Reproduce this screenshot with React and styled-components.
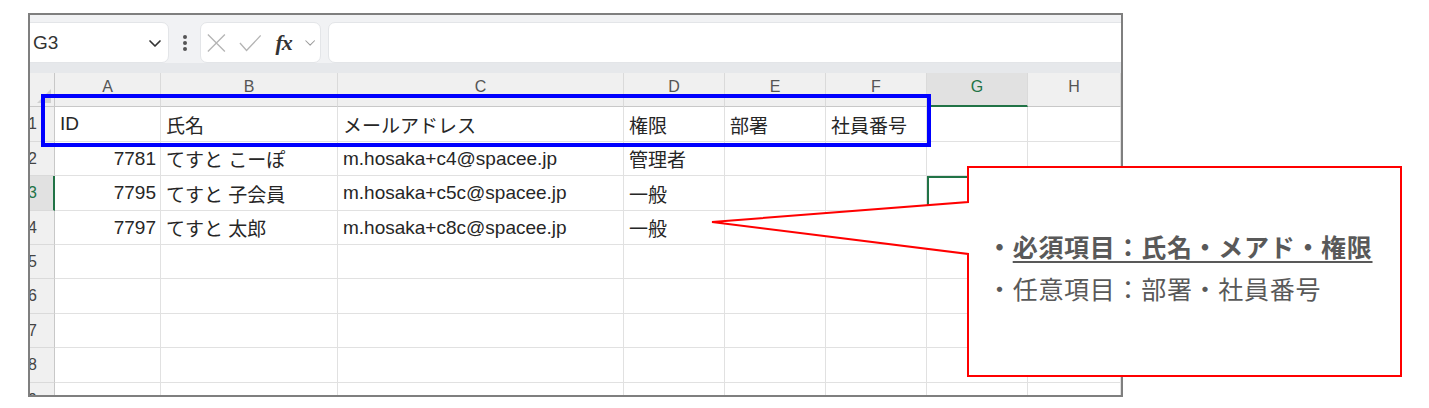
import React from 'react';
import styled, { createGlobalStyle, css } from 'styled-components';

const GlobalStyle = createGlobalStyle`
    html, body {
        margin: 0;
        padding: 0;
        background: #ffffff;
    }
    body {
        font-family: "Liberation Sans", "Noto Sans CJK JP", sans-serif;
    }
`;

const GREEN = '#217346';

const Page = styled.div`
    position: relative;
    width: 1429px;
    height: 408px;
    padding: 13px 0 0 28px;
    box-sizing: border-box;
    overflow: hidden;
`;

const Window = styled.div`
    width: 1095px;
    height: 384px;
    border: 2px solid #7f7f7f;
    box-sizing: border-box;
    overflow: hidden;
    background: #ffffff;
    display: flex;
    flex-direction: column;
`;

const Toolbar = styled.div`
    flex-shrink: 0;
    display: flex;
    align-items: center;
    height: 48px;
    padding-top: 7px;
    box-sizing: border-box;
    background: #f1f2f4;
`;

const Band = styled.div`
    flex-shrink: 0;
    height: 10px;
    background: #e6e8eb;
`;

const Box = styled.div`
    height: 41px;
    box-sizing: border-box;
    background: #ffffff;
    border: 1px solid #e3e5e8;
    border-radius: 7px;
    display: flex;
    align-items: center;
`;

const NameBox = styled(Box)`
    width: 148px;
    margin-left: -9px;
    padding: 0 6px 0 11px;
    justify-content: space-between;
    font-size: 19px;
    color: #333333;
`;

const Dots = styled.div`
    width: 31px;
    display: flex;
    justify-content: center;
    color: #555555;
`;

const FxBox = styled(Box)`
    width: 121px;
    padding: 0 4px 0 5px;
    gap: 12px;
`;

const Fx = styled.span`
    font-family: "Liberation Serif", serif;
    font-style: italic;
    font-weight: bold;
    font-size: 22px;
    color: #333333;
    margin-left: 2px;
    letter-spacing: -1px;
`;

const FormulaInput = styled(Box)`
    flex: 1;
    margin-left: 7px;
    margin-right: -12px;
`;

const Grid = styled.div`
    flex: none;
    display: grid;
    grid-template-columns: 25px 106px 177px 286px 101px 101px 101px 101px 1fr;
    grid-template-rows: 34px 35px 34px 35px 34px 34px 35px 34px 35px 34px;
`;

const Corner = styled.div`
    position: relative;
    background: #f0f0f0;
    border-right: 1px solid #c8c8c8;
    border-bottom: 1px solid #c8c8c8;
    box-sizing: border-box;
    &::after {
        content: '';
        position: absolute;
        right: 3px;
        bottom: 3px;
        border-style: solid;
        border-width: 0 0 14px 14px;
        border-color: transparent transparent #d0d0d0 transparent;
    }
`;

const ColHead = styled.div`
    box-sizing: border-box;
    display: flex;
    justify-content: center;
    align-items: center;
    padding-bottom: 5px;
    font-size: 16px;
    color: #555555;
    background: #f0f0f0;
    border-right: 1px solid #dadada;
    border-bottom: 1px solid #c8c8c8;
    ${p => p.active && css`
        background: #e1e1e1;
        color: ${GREEN};
        border-bottom: 2px solid ${GREEN};
    `}
`;

const RowHead = styled.div`
    box-sizing: border-box;
    display: flex;
    align-items: center;
    overflow: hidden;
    font-size: 16px;
    color: #444444;
    background: #f0f0f0;
    border-right: 1px solid #c8c8c8;
    border-bottom: 1px solid #dadada;
    span {
        margin-left: -2px;
    }
    ${p => p.active && css`
        background: #e1e1e1;
        color: ${GREEN};
        border-right: 2px solid ${GREEN};
    `}
`;

const Cell = styled.div`
    box-sizing: border-box;
    display: flex;
    align-items: center;
    justify-content: ${p => (p.num ? 'flex-end' : 'flex-start')};
    padding: 0 4px 0 5px;
    font-size: 19px;
    color: #262626;
    white-space: nowrap;
    border-right: 1px solid #e1e1e1;
    border-bottom: 1px solid #e1e1e1;
    ${p => p.selected && css`
        box-shadow: inset 0 0 0 2px ${GREEN};
    `}
`;

const HeaderFrame = styled.div`
    position: absolute;
    left: 41px;
    top: 94px;
    width: 890px;
    height: 53px;
    border: 4px solid #0000ff;
    box-sizing: border-box;
`;

const CalloutShape = styled.svg`
    position: absolute;
    left: 0;
    top: 0;
`;

const CalloutText = styled.div`
    position: absolute;
    left: 968px;
    top: 167px;
    width: 433px;
    height: 209px;
    padding-left: 19px;
    padding-bottom: 10px;
    box-sizing: border-box;
    display: flex;
    flex-direction: column;
    justify-content: center;
    font-family: "Noto Sans CJK JP", sans-serif;
    font-size: 25px;
    letter-spacing: 0.7px;
    line-height: 42px;
    color: #595959;
`;

const Line = styled.div`
    ${p => p.strong && css`
        font-weight: bold;
        u {
            text-decoration-thickness: 2px;
            text-underline-offset: 4px;
        }
    `}
`;

const Chevron = ({ size = 14, color = '#333', width = 1.6 }) => (
    <svg width={size} height={size} viewBox="0 0 14 14" fill="none">
        <path d="M2 5l5 5 5-5" stroke={color} strokeWidth={width} strokeLinecap="round" strokeLinejoin="round" />
    </svg>
);

const CrossIcon = () => (
    <svg width="22" height="22" viewBox="0 0 22 22" fill="none">
        <path d="M2 2l18 18M20 2L2 20" stroke="#b4b4b4" strokeWidth="1.4" />
    </svg>
);

const CheckIcon = () => (
    <svg width="24" height="20" viewBox="0 0 24 20" fill="none">
        <path d="M1 10l7 8L23 2" stroke="#b4b4b4" strokeWidth="1.4" />
    </svg>
);

const VDots = () => (
    <svg width="6" height="18" viewBox="0 0 6 18">
        <circle cx="3" cy="3" r="2" fill="#555" />
        <circle cx="3" cy="9" r="2" fill="#555" />
        <circle cx="3" cy="15" r="2" fill="#555" />
    </svg>
);

const columns = ['A', 'B', 'C', 'D', 'E', 'F', 'G', 'H'];

const rows = [
    ['ID', '氏名', 'メールアドレス', '権限', '部署', '社員番号', '', ''],
    ['7781', 'てすと こーぽ', 'm.hosaka+c4@spacee.jp', '管理者', '', '', '', ''],
    ['7795', 'てすと 子会員', 'm.hosaka+c5c@spacee.jp', '一般', '', '', '', ''],
    ['7797', 'てすと 太郎', 'm.hosaka+c8c@spacee.jp', '一般', '', '', '', ''],
    ['', '', '', '', '', '', '', ''],
    ['', '', '', '', '', '', '', ''],
    ['', '', '', '', '', '', '', ''],
    ['', '', '', '', '', '', '', ''],
    ['', '', '', '', '', '', '', ''],
];

export default function App() {
    return (
        <>
            <GlobalStyle />
            <Page>
                <Window>
                    <Toolbar>
                        <NameBox>
                            <span>G3</span>
                            <Chevron size={14} color="#333" width={1.7} />
                        </NameBox>
                        <Dots><VDots /></Dots>
                        <FxBox>
                            <CrossIcon />
                            <CheckIcon />
                            <Fx>fx</Fx>
                            <Chevron size={13} color="#9a9a9a" width={1.2} />
                        </FxBox>
                        <FormulaInput />
                    </Toolbar>
                    <Band />
                    <Grid>
                        <Corner />
                        {columns.map(c => (
                            <ColHead key={c} active={c === 'G'}>{c}</ColHead>
                        ))}
                        {rows.map((r, i) => (
                            <React.Fragment key={i}>
                                <RowHead active={i === 2}><span>{i + 1}</span></RowHead>
                                {r.map((v, j) => (
                                    <Cell
                                        key={j}
                                        num={j === 0 && i > 0}
                                        selected={i === 2 && j === 6}
                                    >
                                        {v}
                                    </Cell>
                                ))}
                            </React.Fragment>
                        ))}
                    </Grid>
                </Window>

                <HeaderFrame />

                <CalloutShape width="1429" height="408" viewBox="0 0 1429 408">
                    <polygon
                        points="968,167 1401,167 1401,376 968,376 968,254 712,222 968,202"
                        fill="#ffffff"
                        stroke="#ff0000"
                        strokeWidth="2"
                    />
                </CalloutShape>
                <CalloutText>
                    <Line strong>・<u>必須項目：氏名・メアド・権限</u></Line>
                    <Line>・任意項目：部署・社員番号</Line>
                </CalloutText>
            </Page>
        </>
    );
}
